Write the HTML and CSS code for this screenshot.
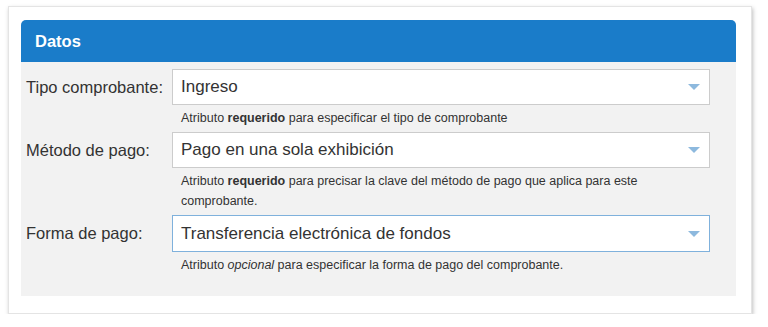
FILE: index.html
```html
<!DOCTYPE html>
<html lang="es">
<head>
  <meta charset="UTF-8" />
  <title>Datos</title>
  <link rel="stylesheet" href="styles.css">
</head>
<body>
  <div class="card">
    <div class="panel">
      <div class="panel-head">Datos</div>
      <div class="panel-body">
        <!-- tipo comprobante -->
        <div class="field">
          <div class="row">
            <label class="label">Tipo comprobante:</label>
            <div class="select">
              <span>Ingreso</span>
              <span class="arrow"></span>
            </div>
          </div>
          <p class="help">Atributo <b>requerido</b> para especificar el tipo de comprobante</p>
        </div>

        <!-- metodo de pago -->
        <div class="field">
          <div class="row">
            <label class="label">Método de pago:</label>
            <div class="select">
              <span>Pago en una sola exhibición</span>
              <span class="arrow"></span>
            </div>
          </div>
          <p class="help">Atributo <b>requerido</b> para precisar la clave del método de pago que aplica para este comprobante.</p>
        </div>

        <!-- forma de pago -->
        <div class="field">
          <div class="row">
            <label class="label">Forma de pago:</label>
            <div class="select focus">
              <span>Transferencia electrónica de fondos</span>
              <span class="arrow"></span>
            </div>
          </div>
          <p class="help">Atributo <i>opcional</i> para especificar la forma de pago del comprobante.</p>
        </div>
      </div>
    </div>
  </div>
</body>
</html>
```

FILE: styles.css
```css
* {
  margin: 0;
  padding: 0;
  box-sizing: border-box;
  font-family: 'Liberation Sans', Arial, sans-serif;
}
body {
  background-color: #ffffff;
}
.card {
  margin: 6px 0 0 8px;
  width: 744px;
  height: 308px;
  padding: 13px 15px 17px 12px;
  background-color: #ffffff;
  border: 1px solid #e4e4e4;
  box-shadow: 1px 2px 4px rgba(0, 0, 0, 0.25);
}
.panel {
  background-color: #f2f2f2;
  border-radius: 5px 5px 0 0;
  height: 100%;
}
.panel-head {
  background-color: #1a7cc9;
  color: #ffffff;
  font-weight: bold;
  font-size: 16.5px;
  height: 42px;
  line-height: 42px;
  padding-left: 14px;
  border-radius: 5px 5px 0 0;
}
.panel-body {
  padding: 7px 26px 0 5px;
}
.row {
  display: flex;
  align-items: center;
}
.label {
  width: 146px;
  font-size: 16.5px;
  color: #333333;
}
.select {
  flex: 1;
  height: 36px;
  display: flex;
  align-items: center;
  justify-content: space-between;
  padding: 0 9px 0 8px;
  background-color: #ffffff;
  border: 1px solid #cccccc;
  font-size: 17px;
  color: #333333;
}
.select.focus {
  border-color: #7fb1dc;
  height: 37px;
}
.arrow {
  width: 0;
  height: 0;
  border-left: 6px solid transparent;
  border-right: 6px solid transparent;
  border-top: 6px solid #8db9de;
}
.help {
  margin: 3px 0 4px 155px;
  font-size: 12.5px;
  line-height: 20px;
  color: #333333;
}
```
